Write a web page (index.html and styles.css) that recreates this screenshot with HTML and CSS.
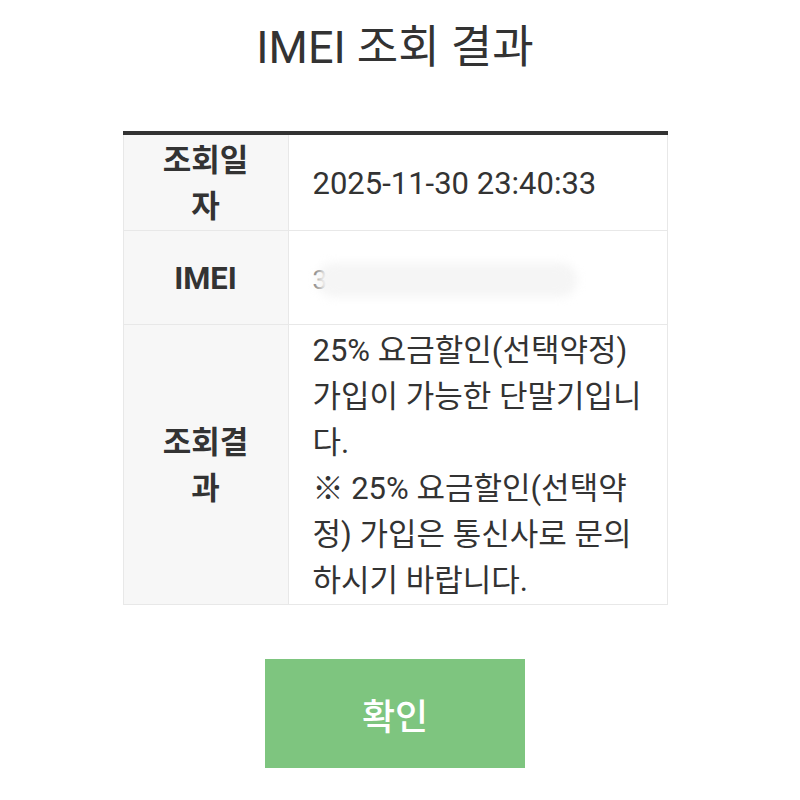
FILE: index.html
```html
<!DOCTYPE html>
<html lang="ko">
<head>
<meta charset="utf-8">
<title>IMEI 조회 결과</title>
<link rel="stylesheet" href="styles.css">
</head>
<body>
<div class="page">
  <h1 class="title">IMEI 조회 결과</h1>
  <table class="result">
    <tbody>
      <tr>
        <th>조회일자</th>
        <td>2025-11-30 23:40:33</td>
      </tr>
      <tr>
        <th>IMEI</th>
        <td><span class="imei"><span class="imei-digit">3</span><span class="smudge"></span></span></td>
      </tr>
      <tr class="tall">
        <th>조회결과</th>
        <td>25% 요금할인(선택약정) 가입이 가능한 단말기입니다.<br>※ 25% 요금할인(선택약정) 가입은 통신사로 문의하시기 바랍니다.</td>
      </tr>
    </tbody>
  </table>
  <div class="actions">
    <button class="confirm" type="button">확인</button>
  </div>
</div>
</body>
</html>
```

FILE: styles.css
```css
html, body {
  margin: 0;
  padding: 0;
  background: #ffffff;
}

body {
  font-family: Roboto, "Noto Sans CJK KR", sans-serif;
  color: #333333;
}

.page {
  width: 790px;
  display: flex;
  flex-direction: column;
  align-items: center;
}

.title {
  margin: 16px 0 0;
  font-size: 45px;
  line-height: 64px;
  font-weight: 400;
  color: #333333;
}

.result {
  margin-top: 51px;
  width: 545px;
  border-collapse: collapse;
  border-top: 4px solid #333333;
  font-size: 31px;
  line-height: 46px;
}

.result th,
.result td {
  border: 1px solid #e8e8e8;
  height: 93px;
  vertical-align: middle;
  box-sizing: border-box;
}

.result tr:first-child th,
.result tr:first-child td {
  border-top: none;
}

.result th {
  width: 165px;
  padding: 3px 34px 0;
  background: #f7f7f7;
  font-weight: 700;
  text-align: center;
  color: #333333;
}

.result td {
  padding: 3px 22px 0 24px;
  font-weight: 400;
  text-align: left;
}

.result tr:nth-child(2) th,
.result tr:nth-child(2) td {
  height: 94px;
}

.imei {
  display: inline-flex;
  align-items: center;
}

.imei-digit {
  color: #777777;
  font-size: 26px;
}

.smudge {
  display: inline-block;
  width: 260px;
  height: 34px;
  margin-left: -10px;
  background: #f5f5f5;
  border-radius: 16px;
  filter: blur(5px);
}

.actions {
  margin-top: 54px;
  display: flex;
  justify-content: center;
}

.confirm {
  width: 260px;
  height: 109px;
  border: none;
  background: #7ec57f;
  color: #ffffff;
  font-family: Roboto, "Noto Sans CJK KR", sans-serif;
  font-size: 36px;
  font-weight: 500;
  cursor: pointer;
}
```
